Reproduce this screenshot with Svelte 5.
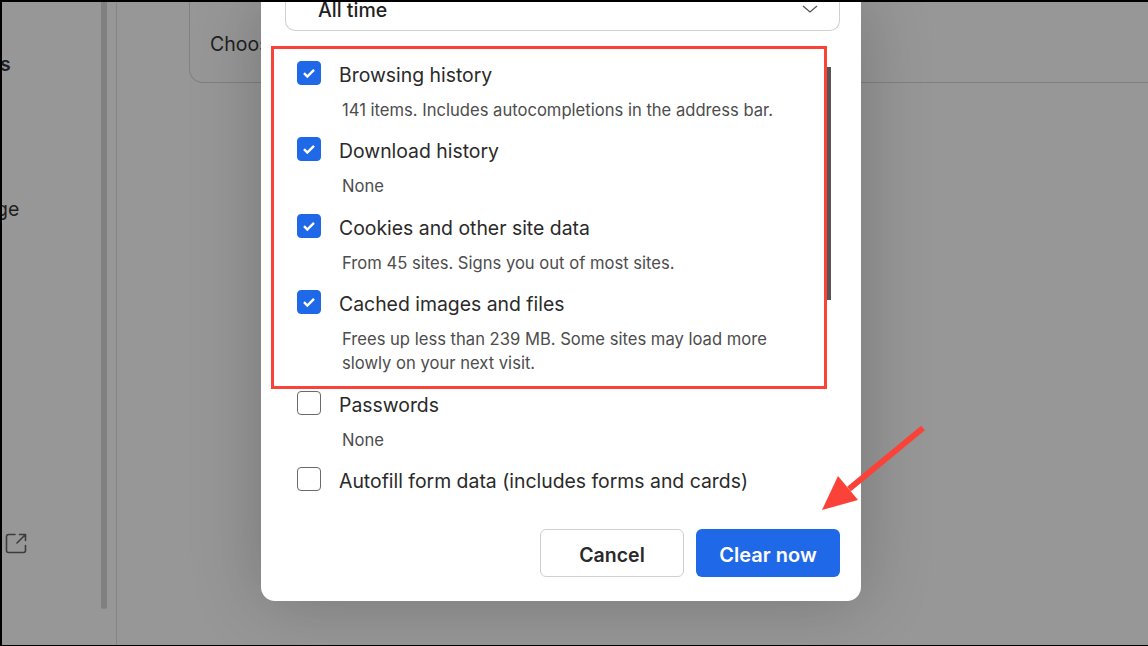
<script>
  const options = [
    { title: 'Browsing history', notes: ['141 items. Includes autocompletions in the address bar.'], checked: true },
    { title: 'Download history', notes: ['None'], checked: true },
    { title: 'Cookies and other site data', notes: ['From 45 sites. Signs you out of most sites.'], checked: true },
    { title: 'Cached images and files', notes: ['Frees up less than 239 MB. Some sites may load more', 'slowly on your next visit.'], checked: true },
    { title: 'Passwords', notes: ['None'], checked: false },
    { title: 'Autofill form data (includes forms and cards)', notes: [], checked: false }
  ];
</script>

<div class="screen">
  <aside class="sidebar">
    <div class="nav">
      <span class="nav-item strong">s</span>
      <span class="nav-item second">ge</span>
      <svg class="ext" width="22" height="22" viewBox="0 0 22 22" fill="none" stroke="#3c3c3c" stroke-width="1.6" stroke-linecap="round" stroke-linejoin="round">
        <path d="M10 1.500H3.500a2 2 0 0 0-2 2v14a2 2 0 0 0 2 2h15a2 2 0 0 0 2-2v-5" />
        <path d="M12 10 20 2M14.500 1.500h6v6" />
      </svg>
    </div>
    <div class="track"><div class="thumb"></div></div>
  </aside>
  <main class="main">
    <section class="card"><span class="card-text">Choose</span></section>
  </main>

  <div class="dialog">
    <div class="select">
      <span>All time</span>
      <svg width="16" height="8" viewBox="0 0 16 8" fill="none" stroke="#555" stroke-width="1.3"><path d="M1 1l7 6 7-6" /></svg>
    </div>
    <div class="list">
      {#each options as o}
        <div class="row">
          <div class="head">
            <span class="box" class:on={o.checked}>
              {#if o.checked}
                <svg width="16" height="16" viewBox="0 0 16 16" fill="none" stroke="#fff" stroke-width="2.4"><path d="M3 8.200l3.300 3.300 6.700-6.700" /></svg>
              {/if}
            </span>
            <span class="title">{o.title}</span>
          </div>
          {#each o.notes as n}
            <div class="note">{n}</div>
          {/each}
        </div>
      {/each}
    </div>
    <div class="bar"></div>
    <div class="actions">
      <button class="btn cancel">Cancel</button>
      <button class="btn clear">Clear now</button>
    </div>
  </div>

  <div class="highlight"></div>
  <svg class="arrow" width="110" height="95" viewBox="0 0 110 95">
    <path d="M103 5 29 66" stroke="#fb4238" stroke-width="6" fill="none" />
    <path d="M2 87 18 53 38 77z" fill="#fb4238" />
  </svg>
</div>

<style>
  :global(body) { margin: 0; background: #000; }
  .screen {
    position: relative;
    box-sizing: border-box;
    width: 1148px;
    height: 646px;
    display: flex;
    overflow: hidden;
    border-top: 2px solid #000;
    border-left: 2px solid #000;
    border-bottom: 1px solid #000;
    background: #979797;
    font-family: "Inter", "Liberation Sans", sans-serif;
  }
  .sidebar {
    width: 114px;
    flex: none;
    display: flex;
    border-right: 1px solid #858585;
    overflow: hidden;
  }
  .nav {
    width: 99px;
    flex: none;
    display: flex;
    flex-direction: column;
    align-items: flex-start;
  }
  .nav-item { font-size: 19.5px; line-height: 24px; color: #1f1f1f; }
  .strong { margin-top: 50px; margin-left: -2px; font-weight: 600; }
  .second { margin-top: 121px; margin-left: -6px; }
  .ext { margin-top: 312px; margin-left: 3px; }
  .track { width: 6px; flex: none; }
  .thumb { height: 607px; background: #808080; border-radius: 0 0 3px 3px; }
  .main { flex: 1; padding-left: 72px; }
  .card {
    box-sizing: border-box;
    height: 81px;
    margin-right: -40px;
    padding: 28px 0 0 20px;
    border: 1px solid #808080;
    border-top: 0;
    border-radius: 0 0 14px 14px;
    color: #1f1f1f;
    font-size: 19.5px;
    line-height: 28px;
  }
  .dialog {
    position: absolute;
    left: 259px;
    top: -2px;
    box-sizing: border-box;
    width: 600px;
    height: 601px;
    background: #fff;
    border-radius: 0 0 14px 14px;
    box-shadow: 0 0 70px rgba(0, 0, 0, 0.22);
    padding: 0 21px 24px 24px;
    display: flex;
    flex-direction: column;
  }
  .select {
    box-sizing: border-box;
    height: 31px;
    margin-bottom: 30px;
    padding: 0 21px 11px 32px;
    border: 1px solid #d0d0d0;
    border-top: 0;
    border-radius: 0 0 10px 10px;
    display: flex;
    align-items: center;
    justify-content: space-between;
    font-size: 19.5px;
    font-weight: 500;
    color: #1f1f1f;
  }
  .select svg { margin-top: -2px; }
  .list { flex: 1; padding-left: 12px; }
  .row { padding-bottom: 15.4px; }
  .head { display: flex; align-items: flex-start; gap: 18px; height: 28px; }
  .box {
    box-sizing: border-box;
    width: 24px;
    height: 24px;
    flex: none;
    border-radius: 4px;
    border: 1px solid #6a6a6a;
    display: flex;
    align-items: center;
    justify-content: center;
  }
  .box.on { background: #1f69e8; border-color: #1f69e8; }
  .title { font-size: 19.4px; color: #2a2a2a; line-height: 28px; }
  .note { font-size: 16.6px; line-height: 24px; color: #4d4d4d; margin-left: 45px; }
  .head + .note { margin-top: 9px; }
  .bar {
    position: absolute;
    left: 566px;
    top: 67px;
    width: 4px;
    height: 233px;
    background: #555;
  }
  .actions { display: flex; justify-content: flex-end; gap: 12px; }
  .btn {
    width: 144px;
    height: 48px;
    border-radius: 6px;
    font: 600 19.5px "Inter", "Liberation Sans", sans-serif;
    padding: 3px 0 0;
  }
  .cancel { background: #fff; border: 1px solid #d0d0d0; color: #2a2a2a; }
  .clear { background: #1f69e8; border: 0; color: #fff; font-size: 20px; }
  .highlight {
    position: absolute;
    left: 269px;
    top: 44px;
    width: 556px;
    height: 343px;
    box-sizing: border-box;
    border: 3px solid #fb4238;
  }
  .arrow { position: absolute; left: 818px; top: 421px; }
</style>
